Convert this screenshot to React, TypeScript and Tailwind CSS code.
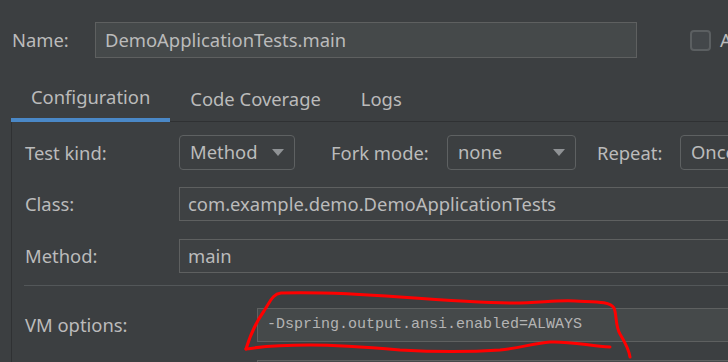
const labelFont = "font-['Noto_Sans','Open_Sans',sans-serif] text-[18.4px]";

const Arrow = () => (
  <svg width="12" height="7" viewBox="0 0 12 7" className="shrink-0">
    <path d="M0 0 L12 0 L6 7 Z" fill="#8f9295" />
  </svg>
);

const Select = ({ value, width }: { value: string; width: string }) => (
  <div
    className={`${width} h-[35px] shrink-0 flex items-center justify-between pl-[10px] pr-[10px] rounded-[4px] border border-[#5e6162] bg-[#3c3f41]`}
  >
    <span className="leading-none">{value}</span>
    <Arrow />
  </div>
);

const Row = ({ label, labelWidth, children }: { label: string; labelWidth: string; children: React.ReactNode }) => (
  <div className="flex items-center h-[34px]">
    <div className={`${labelWidth} shrink-0`}>{label}</div>
    {children}
  </div>
);

export default function App() {
  return (
    <div className={`relative w-[728px] h-[362px] overflow-hidden bg-[#3c3f41] text-[#bbbbbb] ${labelFont}`}>
      {/* name row */}
      <div className="flex items-center h-[36px] mt-[22px] pl-[12px]">
        <div className="w-[83px] shrink-0">Name:</div>
        <div className="w-[542px] h-[36px] shrink-0 flex items-center pl-[9px] bg-[#45494a] border border-[#5e6060]">
          DemoApplicationTests.main
        </div>
        <div className="ml-[53px] w-[21px] h-[21px] shrink-0 rounded-[4px] border-2 border-[#5b5f61] bg-[#43474a]" />
        <div className="ml-[9px] whitespace-nowrap">Allow parallel run</div>
      </div>

      {/* tabs */}
      <div className="ml-[11px] mt-[18px] flex h-[46px] border-b border-[#2f3133]">
        <div className="flex items-center px-[20px] border-b-4 border-[#4a88c7] -mb-px">Configuration</div>
        <div className="flex items-center px-[20px]">Code Coverage</div>
        <div className="flex items-center px-[20px]">Logs</div>
      </div>

      {/* panel */}
      <div className="ml-[11px] border-l border-[#2f3133] pl-[13px] h-[300px] flex flex-col">
        <div className="flex items-center h-[35px] mt-[13px] whitespace-nowrap">
          <div className="w-[154px] shrink-0">Test kind:</div>
          <Select value="Method" width="w-[116px]" />
          <div className="ml-[36px] w-[116px] shrink-0">Fork mode:</div>
          <Select value="none" width="w-[129px]" />
          <div className="ml-[21px] w-[83px] shrink-0">Repeat:</div>
          <Select value="Once" width="w-[130px]" />
        </div>

        <div className="mt-[17px]">
          <Row label="Class:" labelWidth="w-[154px]">
            <div className="flex-1 -mr-[20px] h-[34px] flex items-center pl-[8px] border border-[#5e6060] bg-[#3e4143]">
              com.example.demo.DemoApplicationTests
            </div>
          </Row>
        </div>

        <div className="mt-[18px]">
          <Row label="Method:" labelWidth="w-[154px]">
            <div className="flex-1 -mr-[20px] h-[34px] flex items-center pl-[8px] border border-[#5e6060] bg-[#3e4143]">
              main
            </div>
          </Row>
        </div>

        <div className="mt-[12px] -ml-px h-px bg-[#535759]" />

        <div className="mt-[22px]">
          <Row label="VM options:" labelWidth="w-[232px]">
            <div className="flex-1 -mr-[20px] h-[34px] flex items-center pl-[9px] border border-[#5e6060] bg-[#45494a] font-['Liberation_Mono',monospace] text-[15px] text-[#b4b4b4]">
              -Dspring.output.ansi.enabled=ALWAYS
            </div>
          </Row>
        </div>

        <div className="mt-[18px] ml-[232px] -mr-[20px] h-[34px] border border-[#5e6060] bg-[#45494a]" />
      </div>

      {/* red hand-drawn annotation */}
      <svg className="absolute inset-0 pointer-events-none" width="728" height="362" viewBox="0 0 728 362">
        <path
          d="M246 349 C 250 336, 256 322, 264 311 C 271 300, 273 294, 281 293 C 320 292, 360 294, 400 297 C 440 300, 480 303, 513 303 C 540 303, 555 300, 575 301 C 595 302, 610 301, 614 308 C 617 315, 615 325, 620 334 C 626 344, 629 350, 630 357"
          fill="none"
          stroke="#ff0000"
          strokeWidth="3"
          strokeLinecap="round"
        />
        <path
          d="M246 349 C 265 346, 285 345, 310 345 C 340 345, 365 347, 400 350 C 435 352, 470 352, 500 350 C 520 348, 535 343, 550 342 C 570 341, 590 346, 610 347"
          fill="none"
          stroke="#ff0000"
          strokeWidth="3"
          strokeLinecap="round"
        />
      </svg>
    </div>
  );
}
